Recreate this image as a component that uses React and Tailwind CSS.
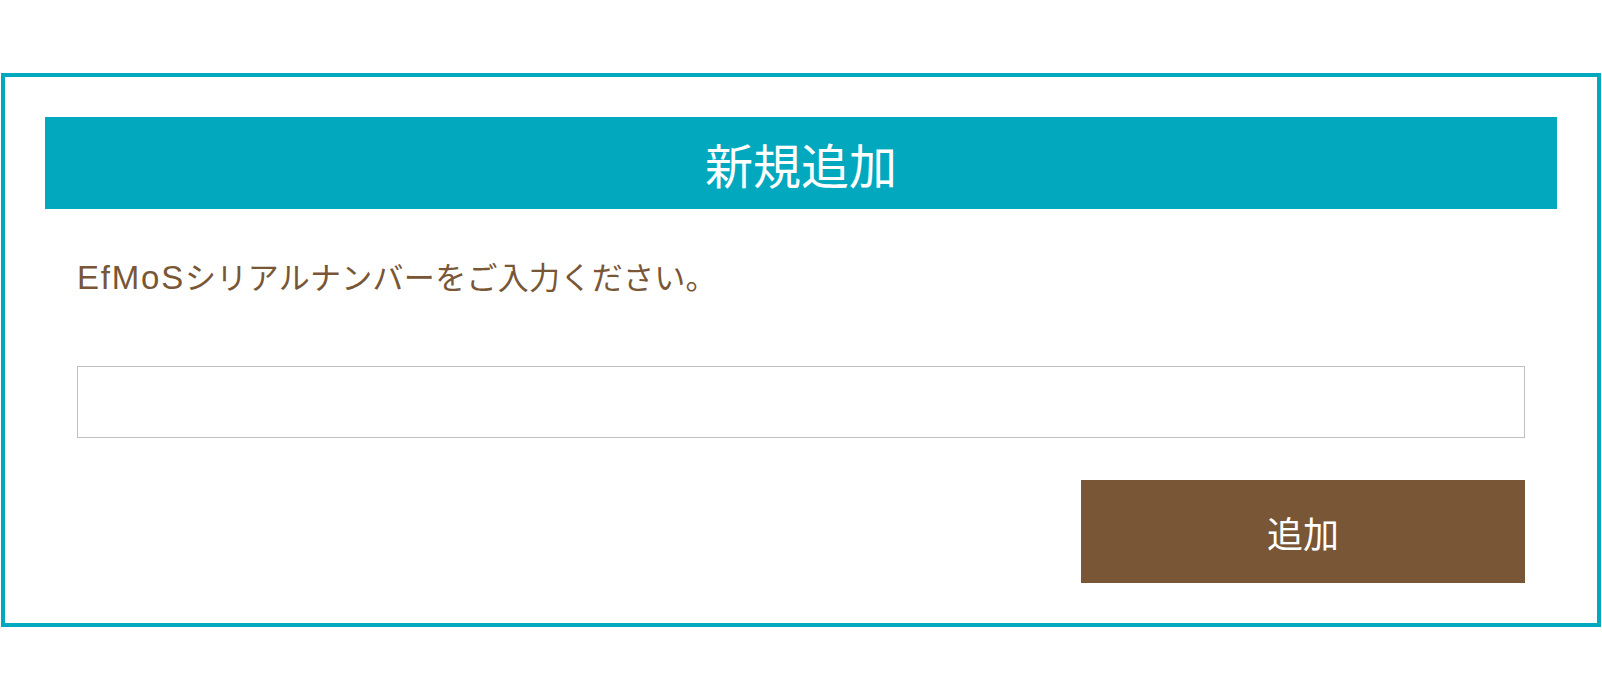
import React from "react";

const font = { fontFamily: '"Noto Sans CJK JP", "Noto Sans", sans-serif' };

export default function App() {
  return (
    <div className="min-h-screen bg-white pt-[73px] pl-px" style={font}>
      <div className="w-[1600px] border-4 border-[#02a9be] p-10">
        {/* header */}
        <div className="flex h-[92px] items-center justify-center bg-[#02a9be] text-[48px] text-white">
          新規追加
        </div>

        <div className="px-8">
          <p className="mt-[52px] h-[30px] whitespace-nowrap text-[31px] leading-[30px] tracking-[0.3px] text-[#785636]">
            <span className="font-['Liberation_Sans',sans-serif] text-[33px] tracking-[1.8px]">
              EfMoS
            </span>
            シリアルナンバーをご入力ください。
          </p>

          <input
            type="text"
            className="mt-[75px] block h-[72px] w-full border border-[#bfbfbf] px-4 text-[24px] outline-none"
          />

          <div className="mt-[42px] flex justify-end">
            <button className="h-[103px] w-[444px] bg-[#785636] text-[36px] text-white">
              追加
            </button>
          </div>
        </div>
      </div>
    </div>
  );
}
